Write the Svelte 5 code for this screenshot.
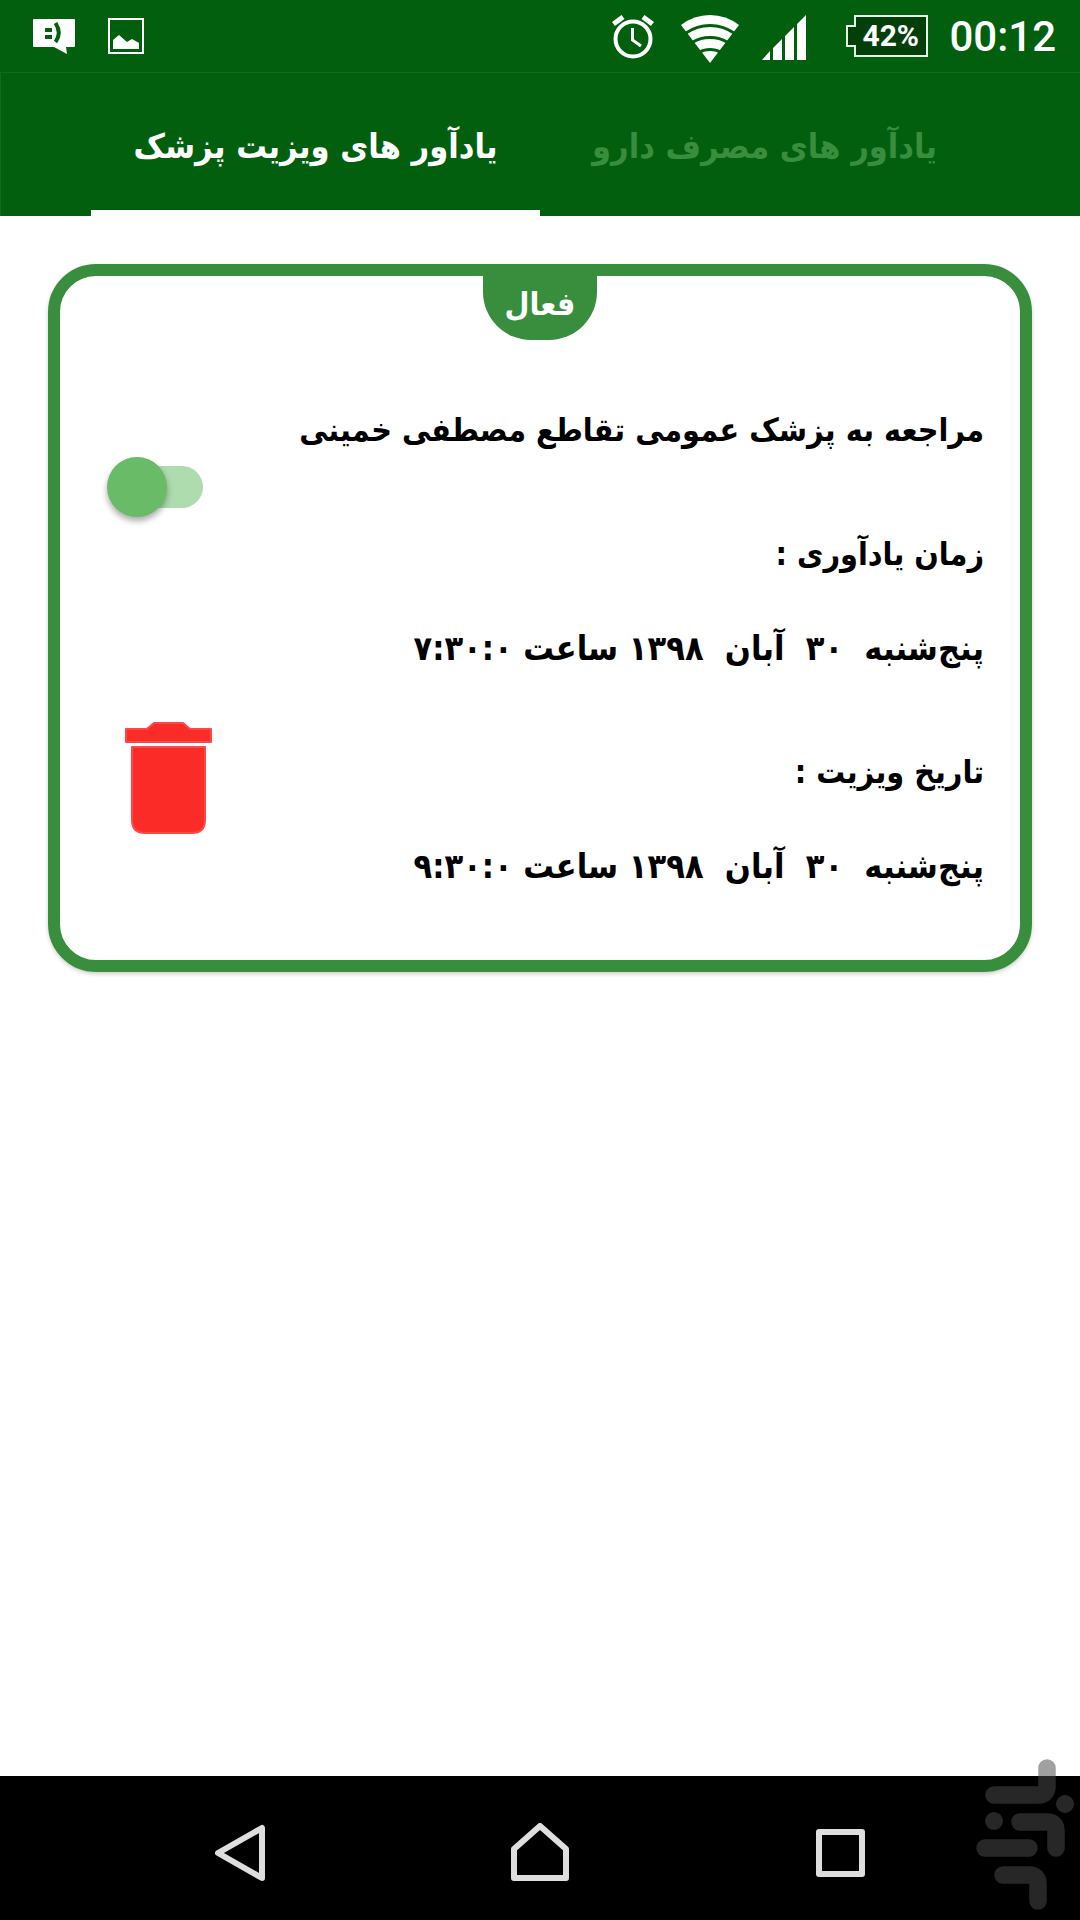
<script>
  const tabs = [
    { id: 'visits', label: 'یادآور های ویزیت پزشک' },
    { id: 'drugs', label: 'یادآور های مصرف دارو' }
  ];
  const reminder = {
    title: 'مراجعه به پزشک عمومی تقاطع مصطفی خمینی',
    times: [
      { label: 'زمان یادآوری :', value: 'پنج‌شنبه  ۳۰  آبان  ۱۳۹۸ ساعت ۷:۳۰:۰' },
      { label: 'تاریخ ویزیت :', value: 'پنج‌شنبه  ۳۰  آبان  ۱۳۹۸ ساعت ۹:۳۰:۰' }
    ]
  };
  let current = $state('visits');
  let active = $state(true);
</script>

<div class="screen">
  <header>
    <div class="status">
      <div class="notices">
        <svg width="42" height="36" viewBox="0 0 42 36" aria-hidden="true">
          <path fill="#fff" d="M1 1H41Q42 1 42 2V28Q42 29 41 29H33L34 36L21 29H1Q0 29 0 28V2Q0 1 1 1Z" />
          <path fill="#015f0e" d="M12 10h7v4h-7zM12 17h7v4h-7z" />
          <path fill="none" stroke="#015f0e" stroke-width="4" d="M22.500 5Q29 15 22.500 24" />
        </svg>
        <svg width="36" height="36" viewBox="0 0 36 36" aria-hidden="true">
          <rect x="1" y="1" width="34" height="34" fill="none" stroke="#fff" stroke-width="2" />
          <path fill="#fff" d="M5 22L11 17L19 24L24 21L31 25V31H5Z" />
        </svg>
      </div>
      <div class="system">
        <svg class="alarm" width="42" height="44" viewBox="0 0 42 44" fill="none" stroke="#fff" aria-hidden="true">
          <circle cx="21" cy="24" r="17.5" stroke-width="4" />
          <path stroke-width="3" d="M20.500 13V25L29 31" />
          <path stroke-width="5" d="M1.500 9L11 2M40.500 9L31 2" />
        </svg>
        <svg class="wifi" width="58" height="48" viewBox="0 0 58 48" aria-hidden="true">
          <path fill="#fff" d="M0 10Q13 0 29 0T58 10L29 48Z" />
          <path fill="none" stroke="#015f0e" stroke-width="3" d="M5 18Q16 10.500 29 10.500T53 18M12 27Q19 22.500 29 22.500T46 27M19 37Q23 34.500 29 34.500T39 37" />
        </svg>
        <svg class="signal" width="44" height="45" viewBox="0 0 44 45" fill="#fff" aria-hidden="true">
          <path d="M0 45L8 36V45ZM11 33L20 24V45H11ZM23 21L32 12V45H23ZM35 9L44 0V45H35Z" />
        </svg>
        <div class="battery">
          <svg width="82" height="42" viewBox="0 0 82 42" aria-hidden="true">
            <path fill="#033f09" stroke="#e8f2e8" stroke-width="2" d="M9 1H81V41H9V31H1V11H9Z" />
          </svg>
          <span>42%</span>
        </div>
        <time>00:12</time>
      </div>
    </div>
    <nav class="tabs">
      {#each tabs as tab (tab.id)}
        <button class:selected={current === tab.id} dir="rtl" onclick={() => (current = tab.id)}>{tab.label}</button>
      {/each}
    </nav>
  </header>

  <main>
    <article>
      <div class="badge" dir="rtl">فعال</div>
      <div class="controls">
        <input type="checkbox" role="switch" aria-label="فعال" bind:checked={active} />
        <button class="delete" aria-label="حذف">
          <svg width="90" height="112" viewBox="0 0 90 112" fill="#fb2b27" stroke="#fc4848" stroke-width="2" stroke-linejoin="round" aria-hidden="true">
            <path d="M2 7H23L30 1H59L66 7H87V20H2Z" />
            <path d="M8 25H81V98Q81 111 68 111H21Q8 111 8 98Z" />
          </svg>
        </button>
      </div>
      <div class="details" dir="rtl">
        <h2>{reminder.title}</h2>
        <dl>
          {#each reminder.times as item}
            <dt>{item.label}</dt>
            <dd>{item.value}</dd>
          {/each}
        </dl>
      </div>
    </article>
  </main>

  <footer>
    <button aria-label="Back">
      <svg width="60" height="60" viewBox="0 0 60 60"><path d="M52 5V55L8 30Z" /></svg>
    </button>
    <button aria-label="Home">
      <svg width="60" height="60" viewBox="0 0 60 60"><path d="M30 3L56 26V55H4V26Z" /></svg>
    </button>
    <button aria-label="Recent apps">
      <svg width="60" height="60" viewBox="0 0 60 60"><path d="M9 9H52V51H9Z" /></svg>
    </button>
  </footer>

  <svg class="watermark" width="98" height="152" viewBox="0 0 98 152" aria-hidden="true">
    <g fill="none" stroke="#4b4b4b" stroke-width="17.500" stroke-linecap="round">
      <path d="M71 9V27Q71 36 62 36H18" />
      <path d="M44 63H71Q80 63 80 72V89" />
      <path d="M9 89H53" />
      <path d="M27 116H53Q62 116 62 125V142" />
    </g>
    <g fill="#4b4b4b"><circle cx="89" cy="45" r="9" /><circle cx="18" cy="62" r="9" /></g>
  </svg>
</div>

<style>
  :global(body) {
    margin: 0;
    background: #fff;
  }
  .screen {
    position: relative;
    display: flex;
    flex-direction: column;
    min-height: 100vh;
    font-family: 'DejaVu Sans Condensed', 'DejaVu Sans', sans-serif;
    font-weight: 700;
    font-size: 32px;
    color: #000;
  }
  button {
    border: 0;
    padding: 0;
    background: none;
    font: inherit;
    color: inherit;
    cursor: pointer;
  }
  svg {
    display: block;
  }
  header {
    background: #015f0e;
    color: #fff;
  }
  .status {
    display: flex;
    justify-content: space-between;
    height: 72px;
    padding: 0 24px 0 33px;
    font-family: Roboto, sans-serif;
    font-weight: 500;
  }
  .notices {
    display: flex;
    align-items: center;
    gap: 33px;
  }
  .system {
    display: flex;
    align-items: flex-start;
    padding-top: 15px;
  }
  .alarm {
    margin-right: 27px;
  }
  .wifi {
    margin-right: 23px;
  }
  .signal {
    margin-right: 40px;
  }
  .battery {
    display: grid;
    align-items: center;
    margin-right: 21px;
  }
  .battery > * {
    grid-area: 1 / 1;
  }
  .battery span {
    padding-left: 16px;
    font-size: 30px;
    font-weight: 700;
    line-height: 42px;
  }
  time {
    font-size: 42px;
    line-height: 44px;
  }
  .tabs {
    display: grid;
    grid-template-columns: 1fr 1fr;
    height: 144px;
    padding: 0 91px;
    box-sizing: border-box;
    box-shadow: inset 1px 1px #0f6c1b;
  }
  .tabs button {
    padding-top: 4px;
    color: #388e3c;
    border-top: 6px solid transparent;
    border-bottom: 6px solid transparent;
    font-size: 34px;
    white-space: nowrap;
  }
  .tabs .selected {
    color: #fff;
    border-bottom-color: #fff;
  }
  main {
    flex: 1;
    padding: 48px;
  }
  article {
    position: relative;
    display: flex;
    justify-content: space-between;
    padding: 122px 36px 62px 47px;
    border: 12px solid #388e3c;
    border-radius: 48px;
    box-shadow: 0 2px 4px #0003;
  }
  .badge {
    position: absolute;
    top: -12px;
    left: 50%;
    transform: translateX(-50%);
    width: 114px;
    height: 76px;
    border-radius: 0 0 48px 48px;
    background: #388e3c;
    color: #fff;
    line-height: 80px;
    text-align: center;
  }
  .controls {
    display: flex;
    flex-direction: column;
    gap: 205px;
    padding-top: 59px;
  }
  input {
    appearance: none;
    display: flex;
    position: relative;
    width: 96px;
    height: 60px;
    margin: 0;
    cursor: pointer;
  }
  input::before {
    content: '';
    position: absolute;
    inset: 9px 0 9px 12px;
    border-radius: 21px;
    background: #aedcae;
  }
  input::after {
    content: '';
    position: relative;
    width: 60px;
    height: 60px;
    border-radius: 50%;
    background: #69bb68;
    box-shadow: 0 4px 6px #0005;
  }
  .delete {
    align-self: flex-start;
    margin-left: 17px;
  }
  h2,
  dl,
  dd {
    margin: 0;
    font: inherit;
  }
  h2,
  dt,
  dd {
    line-height: 64px;
  }
  dt {
    padding-top: 60px;
  }
  dd {
    padding-top: 30px;
    font-size: 34px;
    white-space: pre;
  }
  footer {
    display: flex;
    justify-content: center;
    height: 144px;
    background: #000;
  }
  footer button {
    display: grid;
    place-items: center;
    width: 300px;
    padding-top: 10px;
  }
  footer path {
    fill: none;
    stroke: #dedede;
    stroke-width: 6px;
    stroke-linejoin: round;
  }
  .watermark {
    position: absolute;
    right: 6px;
    bottom: 9px;
    opacity: 0.52;
  }
</style>
